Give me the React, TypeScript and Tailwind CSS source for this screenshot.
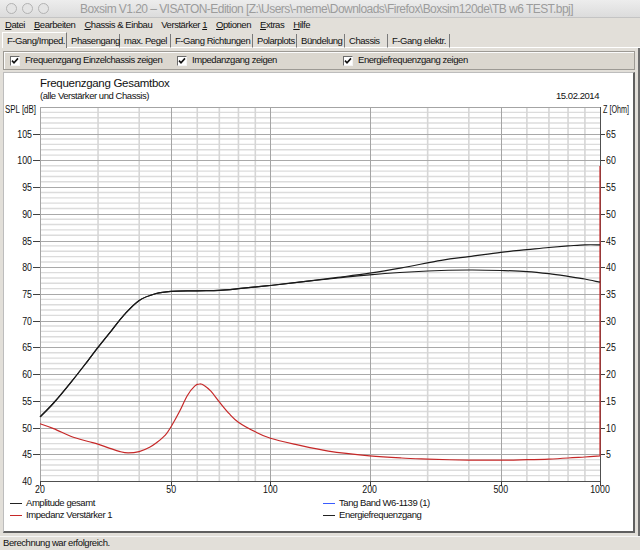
import React from 'react';

const FONT = "font-['Liberation_Sans',Arial,sans-serif]";

// plot geometry (page coordinates)
const PL = 40;
const PR = 600;
const PT = 106;
const PB = 480;
const DECADES = Math.log10(1000 / 20);

const X = (f: number) => PL + ((PR - PL) * Math.log10(f / 20)) / DECADES;
const Y = (db: number) => PT + ((110 - db) * (PB - PT)) / 70;
const YZ = (ohm: number) => PB - (ohm * (PB - PT)) / 70;

type Pt = [number, number];

function smooth(pts: Pt[]) {
  let d = `M${pts[0][0].toFixed(1)},${pts[0][1].toFixed(1)}`;
  for (let i = 0; i < pts.length - 1; i++) {
    const p0 = pts[i - 1] || pts[i];
    const p1 = pts[i];
    const p2 = pts[i + 1];
    const p3 = pts[i + 2] || p2;
    const c1x = p1[0] + (p2[0] - p0[0]) / 6;
    const c1y = p1[1] + (p2[1] - p0[1]) / 6;
    const c2x = p2[0] - (p3[0] - p1[0]) / 6;
    const c2y = p2[1] - (p3[1] - p1[1]) / 6;
    d += ` C${c1x.toFixed(1)},${c1y.toFixed(1)} ${c2x.toFixed(1)},${c2y.toFixed(1)} ${p2[0].toFixed(1)},${p2[1].toFixed(1)}`;
  }
  return d;
}

const lowEnd: Pt[] = [
  [20, 52], [22, 54.6], [25, 58.7], [28, 62.6], [30, 65], [33, 68.2], [36, 71.1], [40, 73.8],
  [45, 75.1], [50, 75.5], [60, 75.6], [70, 75.7], [80, 76], [100, 76.6], [130, 77.4],
];
const amplitude: Pt[] = [
  ...lowEnd,
  [160, 78], [200, 78.6], [300, 79.3], [400, 79.5], [500, 79.4], [600, 79.2],
  [700, 78.8], [800, 78.3], [900, 77.8], [1000, 77.2],
];
const energy: Pt[] = [
  ...lowEnd,
  [160, 78.1], [200, 78.9], [250, 79.9], [330, 81.3], [400, 82], [500, 82.8],
  [600, 83.3], [700, 83.7], [800, 84], [900, 84.2], [1000, 84.2],
];
const impedance: Pt[] = [
  [20, 10.7], [22, 9.8], [25, 8.3], [28, 7.4], [30, 6.9], [33, 6.0], [35, 5.5], [37, 5.25],
  [40, 5.5], [43, 6.3], [45, 7.1], [48, 8.6], [50, 10.2], [53, 13], [56, 16], [59, 17.8],
  [61, 18.2], [63, 17.9], [66, 16.8], [70, 14.8], [75, 12.6], [80, 11], [90, 9.2], [100, 8],
  [120, 6.8], [150, 5.6], [200, 4.7], [250, 4.3], [300, 4.1], [400, 3.9], [500, 3.9],
  [600, 4.0], [700, 4.1], [800, 4.3], [900, 4.5], [1000, 4.7],
];

const toDb = (pts: Pt[]): Pt[] => pts.map(([f, v]) => [X(f), Y(v)]);
const toZ = (pts: Pt[]): Pt[] => pts.map(([f, v]) => [X(f), YZ(v)]);

const minorFreqs = [30, 40, 60, 70, 80, 90, 300, 400, 600, 700, 800, 900];
const majorFreqs = [50, 100, 200, 500];
const xLabels = [20, 50, 100, 200, 500, 1000];

function Chart() {
  const minorH: number[] = [];
  const majorH: number[] = [];
  for (let db = 41; db < 110; db++) (db % 5 === 0 ? majorH : minorH).push(db);

  return (
    <svg width={629} height={392} viewBox="4 104 629 392" className="block shrink-0" fontFamily="'Liberation Sans', Arial, sans-serif">
      {/* minor grid */}
      {minorH.map(db => (
        <line key={`mh${db}`} x1={PL} x2={PR} y1={Y(db)} y2={Y(db)} stroke="#dcdcdc" strokeWidth={1.4} />
      ))}
      {minorFreqs.map(f => (
        <line key={`mv${f}`} x1={X(f)} x2={X(f)} y1={PT} y2={PB} stroke="#d6d6d6" strokeWidth={1.6} />
      ))}
      {/* major grid */}
      {majorH.map(db => (
        <line key={`Mh${db}`} x1={PL} x2={PR} y1={Math.round(Y(db)) + 0.5} y2={Math.round(Y(db)) + 0.5} stroke="#a9a9a9" strokeWidth={1} />
      ))}
      {majorFreqs.map(f => (
        <line key={`Mv${f}`} x1={Math.round(X(f)) + 0.5} x2={Math.round(X(f)) + 0.5} y1={PT} y2={PB} stroke="#a4a4a4" strokeWidth={1} />
      ))}
      {/* ticks */}
      {majorH.map(db => (
        <g key={`t${db}`}>
          <line x1={PL - 7} x2={PL} y1={Math.round(Y(db)) + 0.5} y2={Math.round(Y(db)) + 0.5} stroke="#404040" />
          <line x1={PR} x2={PR + 5} y1={Math.round(Y(db)) + 0.5} y2={Math.round(Y(db)) + 0.5} stroke="#404040" />
        </g>
      ))}
      {/* frame */}
      <line x1={PL} x2={PR} y1={PT + 0.5} y2={PT + 0.5} stroke="#a4a4a4" />
      <line x1={PL + 0.5} x2={PL + 0.5} y1={PT} y2={PB} stroke="#a4a4a4" />
      <line x1={PL} x2={PR} y1={PB + 0.5} y2={PB + 0.5} stroke="#505050" />
      <line x1={PR + 0.5} x2={PR + 0.5} y1={PT} y2={PB + 5} stroke="#505050" />
      {xLabels.map(f => (
        <line key={`xt${f}`} x1={Math.round(X(f)) + 0.5} x2={Math.round(X(f)) + 0.5} y1={PB} y2={PB + 5} stroke="#404040" />
      ))}

      {/* labels */}
      <text x={5} y={112} fontSize={10} textLength={31} lengthAdjust="spacingAndGlyphs" fill="#111">SPL [dB]</text>
      <text x={603} y={112} fontSize={10} textLength={26} lengthAdjust="spacingAndGlyphs" fill="#111">Z [Ohm]</text>
      {majorH.concat([40]).map(db => {
        const s = String(db);
        return (
          <text key={`l${db}`} x={32} y={Y(db) + 4} fontSize={10.5} textAnchor="end" textLength={s.length * 4.9} lengthAdjust="spacingAndGlyphs" fill="#111">{s}</text>
        );
      })}
      {majorH.map(db => {
        const s = String(db - 40);
        return (
          <text key={`r${db}`} x={606} y={Y(db) + 4} fontSize={10.5} textLength={s.length * 4.9} lengthAdjust="spacingAndGlyphs" fill="#111">{s}</text>
        );
      })}
      {xLabels.map(f => {
        const s = String(f);
        return (
          <text key={`xl${f}`} x={X(f)} y={492} fontSize={10.5} textAnchor="middle" textLength={s.length * 4.9} lengthAdjust="spacingAndGlyphs" fill="#111">{s}</text>
        );
      })}

      {/* curves */}
      <path d={smooth(toZ(impedance)) + ` L${PR},165`} fill="none" stroke="#c62828" strokeWidth={1.2} />
      <path d={smooth(toDb(amplitude))} fill="none" stroke="#1a1a1a" strokeWidth={1.2} />
      <path d={smooth(toDb(energy))} fill="none" stroke="#1a1a1a" strokeWidth={1.2} />
    </svg>
  );
}

function Menu({ first, rest }: { first: string; rest: string }) {
  return (
    <span>
      <span className="underline underline-offset-1">{first}</span>
      {rest}
    </span>
  );
}

function Check({ label, w }: { label: string; w: string }) {
  return (
    <div className={`flex items-center gap-[5px] ${w}`}>
      <div className="w-[10px] h-[10px] bg-white border border-t-[#6b6b6b] border-l-[#6b6b6b] border-b-[#f4f4f4] border-r-[#f4f4f4] flex items-center justify-center">
        <svg width="8" height="8" viewBox="0 0 8 8">
          <path d="M1 3.6 L3 5.8 L7 1.4" fill="none" stroke="#111" strokeWidth="1.6" />
        </svg>
      </div>
      <span>{label}</span>
    </div>
  );
}

function LegendItem({ color, label }: { color: string; label: string }) {
  return (
    <div className="flex items-center gap-[4px]">
      <span className={`block w-[12px] h-[1px] ${color}`} />
      <span>{label}</span>
    </div>
  );
}

const tabs: [string, string][] = [
  ['Phasengang', 'w-[53px]'],
  ['max. Pegel', 'w-[51px]'],
  ['F-Gang Richtungen', 'w-[82px]'],
  ['Polarplots', 'w-[44px]'],
  ['Bündelung', 'w-[48px]'],
  ['Chassis', 'w-[43px]'],
  ['F-Gang elektr.', 'w-[62px]'],
];

export default function App() {
  return (
    <div className={`w-[640px] h-[550px] flex flex-col bg-[#e2dfd9] text-[#111] ${FONT} overflow-hidden`}>
      {/* title bar */}
      <div className="h-[18px] shrink-0 flex items-center bg-gradient-to-b from-[#ededed] to-[#dcdcdc] border-b border-[#c4c4c4]">
        <div className="flex gap-[5px] pl-[6px]">
          {[0, 1, 2].map(i => (
            <div key={i} className="w-[11px] h-[11px] rounded-full border border-[#b3b3b3] bg-[#e4e4e4]" />
          ))}
        </div>
        <div className="flex-1 text-center text-[12px] tracking-[-0.55px] text-[#9c9c9c] pr-[36px]">
          Boxsim V1.20 – VISATON-Edition [Z:\Users\-meme\Downloads\Firefox\Boxsim120de\TB w6 TEST.bpj]
        </div>
      </div>

      {/* menu */}
      <div className="h-[14px] shrink-0 flex items-center gap-[9px] pl-[5px] text-[9.5px] tracking-[-0.45px] leading-none">
        <Menu first="D" rest="atei" />
        <Menu first="B" rest="earbeiten" />
        <Menu first="C" rest="hassis & Einbau" />
        <span>Verstärker <span className="underline underline-offset-1">1</span></span>
        <Menu first="O" rest="ptionen" />
        <Menu first="E" rest="xtras" />
        <Menu first="H" rest="ilfe" />
      </div>

      {/* tabs */}
      <div className="h-[16px] shrink-0 flex items-end pl-[2px] text-[9.5px] tracking-[-0.45px] leading-none">
        <div className="w-[65px] h-[16px] pl-[4px] flex items-center bg-[#e2dfd9] border-t border-l border-white border-r border-r-[#7a7a7a]">
          F-Gang/Imped.
        </div>
        {tabs.map(([t, w]) => (
          <div key={t} className={`${w} h-[14px] pl-[4px] flex items-center border-r border-r-[#7a7a7a] border-b border-b-white`}>
            {t}
          </div>
        ))}
        <div className="flex-1 border-b border-b-white" />
      </div>

      {/* page */}
      <div className="flex-1 flex flex-col pl-[3px] pr-[3px] pt-[3px] pb-[3px] border-r-2 border-r-[#6e6e6e]">
        <div className="h-[19px] shrink-0 flex items-center pl-[6px] bg-[#dbd7cf] border border-[#9d9a94] shadow-[inset_1px_1px_0_#fbfbfb] text-[9.5px] tracking-[-0.45px]">
          <Check label="Frequenzgang Einzelchassis zeigen" w="w-[167px]" />
          <Check label="Impedanzgang zeigen" w="w-[166px]" />
          <Check label="Energiefrequenzgang zeigen" w="w-[200px]" />
        </div>
        <div className="mt-[2px] flex-1 flex flex-col bg-white border-l border-t border-[#bdbdbd] border-r-2 border-b-2 border-r-[#5f5f5f] border-b-[#5f5f5f]">
          <div className="h-[32px] shrink-0 flex flex-col pt-[4px] pl-[36px] pr-[34px]">
            <div className="text-[11.5px] leading-[13px] tracking-[-0.3px]">Frequenzgang Gesamtbox</div>
            <div className="flex justify-between text-[9.5px] leading-[12px] tracking-[-0.45px]">
              <span>(alle Verstärker und Chassis)</span>
              <span>15.02.2014</span>
            </div>
          </div>
          <Chart />
          <div className="grid grid-cols-[313px_1fr] pl-[6px] text-[9.5px] leading-[12px] tracking-[-0.45px]">
            <LegendItem color="bg-[#222222]" label="Amplitude gesamt" />
            <LegendItem color="bg-[#3a5cff]" label="Tang Band W6-1139 (1)" />
            <LegendItem color="bg-[#c62828]" label="Impedanz Verstärker 1" />
            <LegendItem color="bg-[#222222]" label="Energiefrequenzgang" />
          </div>
        </div>
      </div>

      {/* status */}
      <div className="h-[14px] shrink-0 flex items-center pl-[3px] border-t border-[#f6f6f6] text-[9.5px] tracking-[-0.45px]">
        Berechnung war erfolgreich.
      </div>
    </div>
  );
}
